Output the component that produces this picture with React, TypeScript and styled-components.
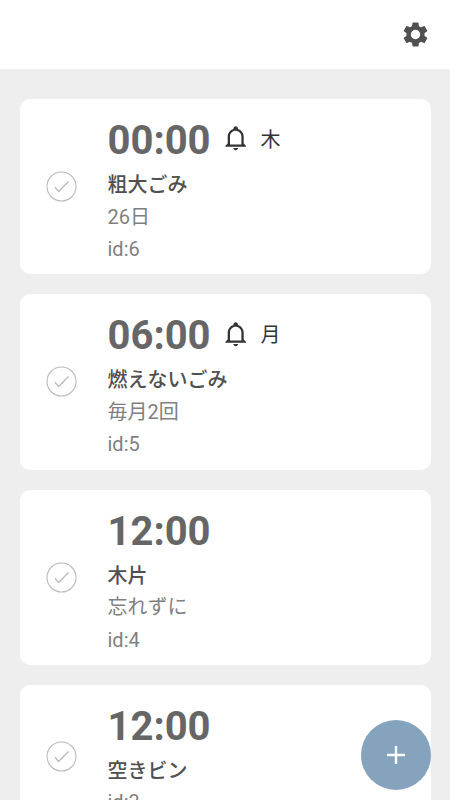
import React from "react";
import styled, { createGlobalStyle } from "styled-components";

const Global = createGlobalStyle`
  * { box-sizing: border-box; }
  body { margin: 0; background: #eeeeee; overflow: hidden; font-family: Roboto, "Noto Sans CJK JP", sans-serif; }
`;

const Screen = styled.div`
  position: relative;
  height: 800px;
  overflow: hidden;
  background: #eeeeee;
`;

const Header = styled.header`
  display: flex;
  align-items: center;
  justify-content: flex-end;
  height: 69px;
  padding: 0 20px 1px 0;
  background: #fff;
`;

const List = styled.main`
  display: flex;
  flex-direction: column;
  gap: 20px;
  padding: 30px 19.3px 0 20px;
`;

const Card = styled.article<{ $short?: boolean }>`
  display: flex;
  align-items: center;
  flex: none;
  height: ${(p) => (p.$short ? 143 : 175.3)}px;
  padding: 0 26px;
  border-radius: 10px;
  background: #fff;
`;

const Check = styled.svg`
  flex: none;
  width: 31px;
  height: 31px;
  margin-right: 30.5px;
`;

const Details = styled.div`
  height: 100%;
  padding-top: 17px;
`;

const TimeRow = styled.div`
  display: flex;
  align-items: center;
  height: 49px;
`;

const Time = styled.time`
  width: 114.5px;
  color: #666;
  font-size: 40px;
  font-weight: 700;
  line-height: 49px;
`;

const Bell = styled.svg`
  width: 27.4px;
  height: 27.4px;
  margin-bottom: 5px;
`;

const Day = styled.span`
  margin-left: 11px;
  color: #333;
  font-size: 20px;
  line-height: 28px;
  margin-bottom: 2px;
`;

const Line = styled.div<{ $strong?: boolean }>`
  height: 32.5px;
  color: ${(p) => (p.$strong ? "#505050" : "#808080")};
  font-size: 20px;
  font-weight: ${(p) => (p.$strong ? 500 : 400)};
  line-height: ${(p) => (p.$strong ? 40 : 38)}px;
  white-space: nowrap;
`;

const AddButton = styled.button`
  position: absolute;
  right: 19.3px;
  bottom: 10px;
  display: flex;
  align-items: center;
  justify-content: center;
  width: 70px;
  height: 70px;
  padding: 0;
  border: 0;
  border-radius: 50%;
  background: #85a3bd;
`;

const tasks = [
  { id: 6, time: "00:00", day: "木", title: "粗大ごみ", note: "26日" },
  { id: 5, time: "06:00", day: "月", title: "燃えないごみ", note: "毎月2回" },
  { id: 4, time: "12:00", title: "木片", note: "忘れずに" },
  { id: 3, time: "12:00", title: "空きビン" },
];

export default function App() {
  return (
    <Screen>
      <Global />
      <Header>
        <svg width="29" height="29" viewBox="0 0 24 24" fill="#505050">
          <path d="M19.43 12.98c.04-.32.07-.64.07-.98s-.03-.66-.07-.98l2.11-1.65c.19-.15.24-.42.12-.64l-2-3.46c-.12-.22-.39-.3-.61-.22l-2.49 1c-.52-.4-1.08-.73-1.69-.98l-.38-2.65A.49.49 0 0 0 14 2h-4c-.25 0-.46.18-.49.42l-.38 2.65c-.61.25-1.17.59-1.69.98l-2.49-1c-.23-.09-.49 0-.61.22l-2 3.46c-.13.22-.07.49.12.64l2.11 1.65c-.04.32-.07.65-.07.98s.03.66.07.98l-2.11 1.65c-.19.15-.24.42-.12.64l2 3.46c.12.22.39.3.61.22l2.49-1c.52.4 1.08.73 1.69.98l.38 2.65c.03.24.24.42.49.42h4c.25 0 .46-.18.49-.42l.38-2.65c.61-.25 1.17-.59 1.69-.98l2.49 1c.23.09.49 0 .61-.22l2-3.46c.12-.22.07-.49-.12-.64l-2.11-1.65zM12 15.9A3.9 3.9 0 1 1 12 8.1a3.9 3.9 0 0 1 0 7.8z" />
        </svg>
      </Header>
      <List>
        {tasks.map((t) => (
          <Card key={t.id} $short={!t.note}>
            <Check viewBox="0 0 31 31" fill="none" stroke="#bcbcbc">
              <circle cx="15.5" cy="15.5" r="14.5" strokeWidth="1.1" />
              <path d="M9 16.2l3.6 4.2L22.5 10.6" strokeWidth="1.4" />
            </Check>
            <Details>
              <TimeRow>
                <Time>{t.time}</Time>
                {t.day && (
                  <>
                    <Bell viewBox="0 0 24 24" fill="#333">
                      <path d="M10 21h4c0 1.1-.9 2-2 2s-2-.9-2-2M21 19v1H3v-1l2-2v-6c0-3.1 2.03-5.83 5-6.71V4c0-1.1.9-2 2-2s2 .9 2 2v.29c2.97.88 5 3.61 5 6.71v6l2 2M17 11c0-2.76-2.24-5-5-5s-5 2.24-5 5v7h10v-7z" />
                    </Bell>
                    <Day>{t.day}</Day>
                  </>
                )}
              </TimeRow>
              <Line $strong>{t.title}</Line>
              {t.note && <Line>{t.note}</Line>}
              <Line>id:{t.id}</Line>
            </Details>
          </Card>
        ))}
      </List>
      <AddButton aria-label="追加">
        <svg width="18" height="18" viewBox="0 0 18 18" fill="none" stroke="#fff" strokeWidth="2.4">
          <path d="M9 0v18M0 9h18" />
        </svg>
      </AddButton>
    </Screen>
  );
}
